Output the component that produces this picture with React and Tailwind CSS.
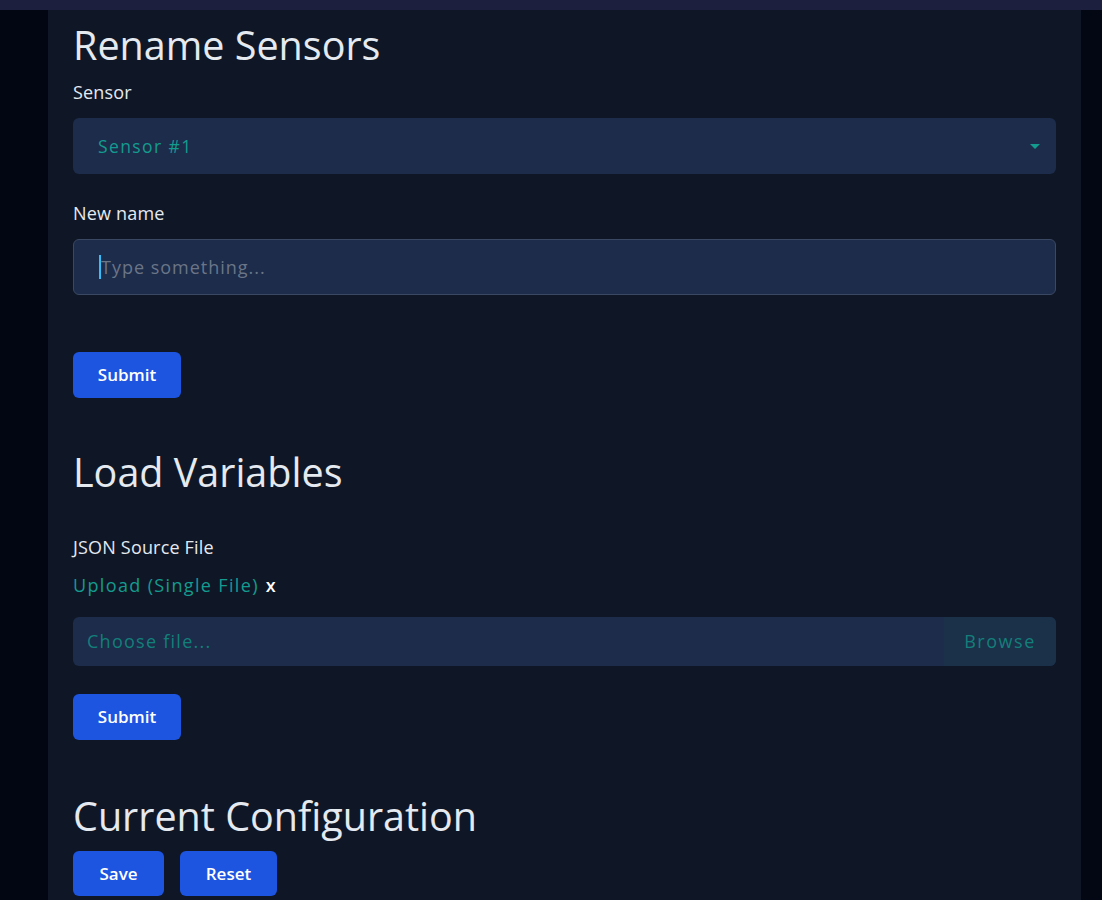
import React from "react";

export default function App() {
  return (
    <div
      className="w-[1102px] h-[900px] overflow-hidden bg-[#030814] flex flex-col"
      style={{ fontFamily: "'Open Sans', 'Noto Sans', sans-serif" }}
    >
      <div className="h-[10px] bg-[#1c1f3d] shrink-0" />
      <div className="flex flex-1">
        <div className="w-[48px] bg-[#020612]" />
        <div className="w-[1033px] bg-[#0f1726] px-[25px] text-[#e5e9f0]">
          {/* RENAME SENSORS */}
          <h2 className="text-[39.5px] leading-[44px] mt-[13px]">Rename Sensors</h2>
          <label className="block text-[18px] tracking-[0.01em] mt-[15px] leading-[20px]">Sensor</label>
          <div className="mt-[16px] h-[56px] rounded-md bg-[#1c2c4a] flex items-center justify-between px-[25px]">
            <span className="text-[17.5px] tracking-[0.08em] text-[#149b90]">Sensor #1</span>
            <span className="w-0 h-0 border-l-[5px] border-r-[5px] border-t-[5px] border-l-transparent border-r-transparent border-t-[#149b90] mr-[-9px]" />
          </div>
          <label className="block text-[18px] tracking-[0.01em] mt-[29px] leading-[20px]">New name</label>
          <div className="mt-[16px] h-[56px] rounded-md bg-[#1c2c4a] border border-[#3a4863] flex items-center px-[25px]">
            <span className="w-[2px] h-[24px] bg-[#38bdf8]" />
            <span className="text-[18px] tracking-[0.055em] text-[#6b7588]">Type something...</span>
          </div>
          <button className="mt-[57px] w-[108px] h-[46px] rounded-md bg-[#1d55e1] text-white text-[17px] font-semibold">
            Submit
          </button>

          {/* LOAD VARIABLES */}
          <h2 className="text-[39.5px] leading-[44px] mt-[52px]">Load Variables</h2>
          <label className="block text-[18px] tracking-[0.01em] mt-[43px] leading-[20px]">JSON Source File</label>
          <div className="mt-[17px] text-[18px] leading-[22px]">
            <span className="text-[#149b90] tracking-[0.075em]">Upload (Single File)</span>
            <span className="text-white ml-[7px] font-semibold">x</span>
          </div>
          <div className="mt-[21px] h-[49px] rounded-md bg-[#1c2c4a] flex overflow-hidden">
            <div className="flex-1 flex items-center px-[14px] text-[18px] tracking-[0.07em] text-[#137f7a]">
              Choose file...
            </div>
            <div className="w-[112px] bg-[#1b3049] flex items-center justify-center text-[18px] tracking-[0.085em] text-[#137f7a]">
              Browse
            </div>
          </div>
          <button className="mt-[28px] w-[108px] h-[46px] rounded-md bg-[#1d55e1] text-white text-[17px] font-semibold">
            Submit
          </button>

          {/* CURRENT CONFIGURATION */}
          <h2 className="text-[39.5px] leading-[44px] mt-[54px]">Current Configuration</h2>
          <div className="flex gap-[16px] mt-[13px]">
            <button className="w-[91px] h-[45px] rounded-md bg-[#1d55e1] text-white text-[17px] font-semibold">
              Save
            </button>
            <button className="w-[97px] h-[45px] rounded-md bg-[#1d55e1] text-white text-[17px] font-semibold">
              Reset
            </button>
          </div>
        </div>
        <div className="flex-1 bg-[#030714]" />
      </div>
    </div>
  );
}
